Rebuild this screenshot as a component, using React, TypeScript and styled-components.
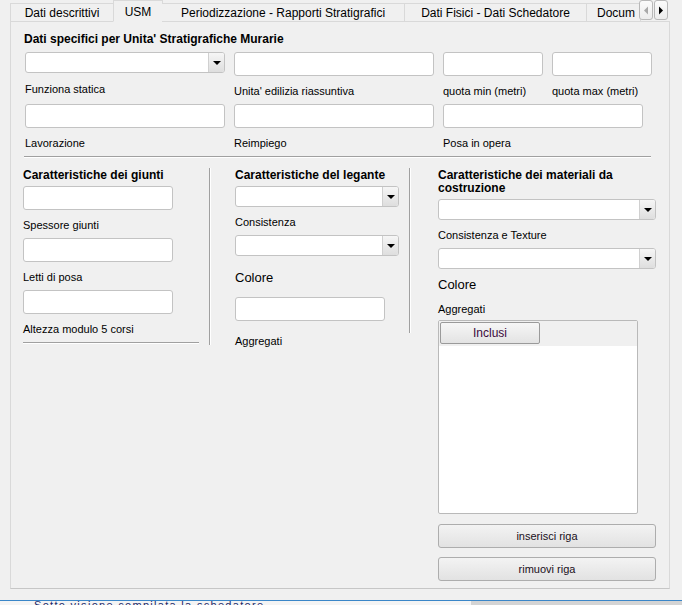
import React from 'react';
import styled, { createGlobalStyle } from 'styled-components';

const GlobalStyle = createGlobalStyle`
    html, body {
        margin: 0;
        padding: 0;
        background: #f0f0f0;
    }
    body {
        font-family: 'Liberation Sans', Arial, sans-serif;
        color: #000;
    }
`;

const Screen = styled.div`
    width: 682px;
    height: 605px;
    overflow: hidden;
    display: flex;
    flex-direction: column;
    background: #f0f0f0;
`;

const Window = styled.div`
    width: 680px;
    height: 600px;
    border-right: 2px solid #3a86c8;
    border-bottom: 1px solid #3a86c8;
    display: flex;
    flex-direction: column;
    padding-left: 10px;
    box-sizing: content-box;
`;

const StatusStrip = styled.div`
    height: 4px;
    display: flex;
    overflow: hidden;
`;

const StatusText = styled.div`
    width: 437px;
    background: #f4f4f4;
    font-size: 11px;
    line-height: 11px;
    color: #1d2a6a;
    white-space: nowrap;
    padding-left: 34px;
    margin-top: -1px;
    letter-spacing: 1.3px;
`;

const StatusRest = styled.div`
    flex: 1;
    background: #d4d4d4;
`;

const TabStrip = styled.div`
    height: 22px;
    width: 660px;
    display: flex;
    align-items: flex-end;
    position: relative;
    z-index: 1;
`;

const Tab = styled.div<{ $active?: boolean; $width: number }>`
    width: ${(p) => p.$width}px;
    height: ${(p) => (p.$active ? 22 : 19)}px;
    box-sizing: border-box;
    border: 1px solid #d9d9d9;
    border-bottom: ${(p) => (p.$active ? '1px solid #f0f0f0' : '1px solid #d9d9d9')};
    border-left: ${(p) => (p.$active ? '1px solid #d9d9d9' : 'none')};
    margin-left: ${(p) => (p.$active ? '-1px' : '0')};
    margin-right: ${(p) => (p.$active ? '-1px' : '0')};
    background: #f0f0f0;
    font-size: 12px;
    line-height: 18px;
    padding-top: ${(p) => (p.$active ? 2 : 0)}px;
    text-align: center;
    white-space: nowrap;
    overflow: hidden;
    flex-shrink: 0;
    &:first-child {
        border-left: 1px solid #d9d9d9;
    }
`;

const ClippedTab = styled(Tab)`
    text-align: left;
    padding-left: 10px;
`;

const Scroller = styled.div`
    display: flex;
    align-self: flex-start;
    margin-left: -2px;
`;

const ArrowButton = styled.div`
    width: 14px;
    height: 20px;
    box-sizing: border-box;
    border: 1px solid #b8b8b8;
    border-radius: 3px;
    background: linear-gradient(#fbfbfb, #ececec);
    display: flex;
    align-items: center;
    justify-content: center;
    margin-right: 1px;
`;

const Pane = styled.div`
    width: 660px;
    height: 568px;
    margin-top: -1px;
    box-sizing: border-box;
    border: 1px solid #d9d9d9;
    border-bottom-color: #c6c6c6;
    background: #f0f0f0;
    display: flex;
    flex-direction: column;
    padding: 10px 0 0 13px;
`;

const SectionTitle = styled.div`
    font-weight: bold;
    font-size: 12px;
    line-height: 14px;
    height: 14px;
`;

const TopGrid = styled.div`
    display: grid;
    grid-template-columns: 200px 200px 100px 100px;
    column-gap: 9px;
    row-gap: 6px;
    margin-top: 6px;
    padding-left: 1px;
`;

const Field = styled.div<{ $span?: number }>`
    display: flex;
    flex-direction: column;
    grid-column: span ${(p) => p.$span ?? 1};
`;

const Caption = styled.div<{ $gap?: number }>`
    font-size: 11px;
    line-height: 14px;
    height: 14px;
    margin-top: ${(p) => p.$gap ?? 8}px;
    white-space: nowrap;
`;

const BigCaption = styled.div<{ $gap: number }>`
    font-size: 13px;
    line-height: 16px;
    height: 16px;
    margin-top: ${(p) => p.$gap}px;
`;

const TextBox = styled.div<{ $width?: number }>`
    width: ${(p) => (p.$width ? `${p.$width}px` : '100%')};
    height: 24px;
    box-sizing: border-box;
    border: 1px solid #c3c3c3;
    border-radius: 3px;
    background: #fff;
`;

const ComboBox = styled.div<{ $width?: number }>`
    width: ${(p) => (p.$width ? `${p.$width}px` : '100%')};
    height: 21px;
    box-sizing: border-box;
    border: 1px solid #c3c3c3;
    border-radius: 3px;
    background: #fff;
    display: flex;
    justify-content: flex-end;
    overflow: hidden;
`;

const DropButton = styled.div`
    width: 15px;
    height: 100%;
    border-left: 1px solid #d0d0d0;
    background: linear-gradient(#f6f6f6, #dedede);
    display: flex;
    align-items: center;
    justify-content: center;
`;

const DownTriangle = styled.div`
    width: 0;
    height: 0;
    border-left: 4px solid transparent;
    border-right: 4px solid transparent;
    border-top: 4px solid #000;
`;

const Separator = styled.div<{ $width: number }>`
    width: ${(p) => p.$width}px;
    height: 0;
    border-top: 1px solid #a0a0a0;
    border-bottom: 1px solid #ffffff;
`;

const Columns = styled.div`
    display: flex;
    align-items: flex-start;
    margin-top: 10px;
    margin-left: -1px;
`;

const Column = styled.div<{ $width: number }>`
    width: ${(p) => p.$width}px;
    display: flex;
    flex-direction: column;
    flex-shrink: 0;
`;

const VRule = styled.div<{ $height: number; $before: number; $after: number }>`
    width: 0;
    height: ${(p) => p.$height}px;
    border-left: 1px solid #a0a0a0;
    border-right: 1px solid #ffffff;
    margin-left: ${(p) => p.$before}px;
    margin-right: ${(p) => p.$after}px;
    flex-shrink: 0;
`;

const Heading = styled.div`
    font-weight: bold;
    font-size: 12px;
    line-height: 13px;
    padding-top: 1px;
`;

const Gap = styled.div<{ $h: number }>`
    height: ${(p) => p.$h}px;
    flex-shrink: 0;
`;

const TableBox = styled.div`
    width: 200px;
    height: 194px;
    box-sizing: border-box;
    border: 1px solid #b9b9b9;
    border-radius: 2px;
    background: #fff;
    display: flex;
    flex-direction: column;
    margin-top: 4px;
`;

const TableHeader = styled.div`
    height: 24px;
    background: #f0f0f0;
    padding: 1px 0 0 1px;
    display: flex;
`;

const HeaderCell = styled.div`
    width: 100px;
    height: 22px;
    box-sizing: border-box;
    border: 1px solid #9a9a9a;
    border-radius: 2px;
    background: linear-gradient(#f6f6f6, #e3e3e3);
    font-size: 12px;
    line-height: 20px;
    text-align: center;
    color: #3c0a3c;
`;

const PushButton = styled.div<{ $gap: number }>`
    width: 218px;
    height: 24px;
    margin-top: ${(p) => p.$gap}px;
    box-sizing: border-box;
    border: 1px solid #adadad;
    border-radius: 3px;
    background: linear-gradient(#f3f3f3, #e2e2e2);
    font-size: 11px;
    line-height: 22px;
    text-align: center;
    color: #1a0f1a;
`;

function Combo({ width }: { width?: number }) {
    return (
        <ComboBox $width={width}>
            <DropButton>
                <DownTriangle />
            </DropButton>
        </ComboBox>
    );
}

const tabs = [
    { label: 'Dati descrittivi', width: 104 },
    { label: 'USM', width: 50, active: true },
    { label: 'Periodizzazione - Rapporti Stratigrafici', width: 243 },
    { label: 'Dati Fisici - Dati Schedatore', width: 182 },
];

export default function App() {
    return (
        <Screen>
            <GlobalStyle />
            <Window>
                <TabStrip>
                    {tabs.map((t) => (
                        <Tab key={t.label} $width={t.width} $active={t.active}>
                            {t.label}
                        </Tab>
                    ))}
                    <ClippedTab $width={54}>Docum</ClippedTab>
                    <Scroller>
                        <ArrowButton>
                            <svg width="6" height="9" viewBox="0 0 6 9">
                                <path d="M5 0.5 L1 4.5 L5 8.5 Z" fill="#a8a8a8" />
                            </svg>
                        </ArrowButton>
                        <ArrowButton>
                            <svg width="6" height="9" viewBox="0 0 6 9">
                                <path d="M1 0.5 L5 4.5 L1 8.5 Z" fill="#000" />
                            </svg>
                        </ArrowButton>
                    </Scroller>
                </TabStrip>
                <Pane>
                    <SectionTitle>Dati specifici per Unita' Stratigrafiche Murarie</SectionTitle>
                    <TopGrid>
                        <Field>
                            <Combo />
                            <Caption $gap={9}>Funziona statica</Caption>
                        </Field>
                        <Field>
                            <TextBox />
                            <Caption>Unita' edilizia riassuntiva</Caption>
                        </Field>
                        <Field>
                            <TextBox />
                            <Caption>quota min (metri)</Caption>
                        </Field>
                        <Field>
                            <TextBox />
                            <Caption>quota max (metri)</Caption>
                        </Field>
                        <Field>
                            <TextBox />
                            <Caption>Lavorazione</Caption>
                        </Field>
                        <Field>
                            <TextBox />
                            <Caption>Reimpiego</Caption>
                        </Field>
                        <Field $span={2}>
                            <TextBox $width={200} />
                            <Caption>Posa in opera</Caption>
                        </Field>
                    </TopGrid>
                    <Gap $h={6} />
                    <Separator $width={627} />
                    <Columns>
                        <Column $width={176}>
                            <Heading>Caratteristiche dei giunti</Heading>
                            <Gap $h={4} />
                            <TextBox $width={150} />
                            <Caption>Spessore giunti</Caption>
                            <Gap $h={6} />
                            <TextBox $width={150} />
                            <Caption>Letti di posa</Caption>
                            <Gap $h={6} />
                            <TextBox $width={150} />
                            <Caption>Altezza modulo 5 corsi</Caption>
                            <Gap $h={6} />
                            <Separator $width={176} />
                        </Column>
                        <VRule $height={177} $before={10} $after={24} />
                        <Column $width={164}>
                            <Heading>Caratteristiche del legante</Heading>
                            <Gap $h={4} />
                            <Combo />
                            <Caption>Consistenza</Caption>
                            <Gap $h={6} />
                            <Combo />
                            <BigCaption $gap={14}>Colore</BigCaption>
                            <Gap $h={11} />
                            <TextBox $width={150} />
                            <Caption $gap={13}>Aggregati</Caption>
                        </Column>
                        <VRule $height={165} $before={10} $after={27} />
                        <Column $width={218}>
                            <Heading>
                                Caratteristiche dei materiali da
                                <br />
                                costruzione
                            </Heading>
                            <Gap $h={4} />
                            <Combo />
                            <Caption>Consistenza e Texture</Caption>
                            <Gap $h={6} />
                            <Combo />
                            <BigCaption $gap={8}>Colore</BigCaption>
                            <Caption $gap={9}>Aggregati</Caption>
                            <TableBox>
                                <TableHeader>
                                    <HeaderCell>Inclusi</HeaderCell>
                                </TableHeader>
                            </TableBox>
                            <PushButton $gap={10}>inserisci riga</PushButton>
                            <PushButton $gap={9}>rimuovi riga</PushButton>
                        </Column>
                    </Columns>
                </Pane>
            </Window>
            <StatusStrip>
                <StatusText>Sotto visione compilata la schedatore</StatusText>
                <StatusRest />
            </StatusStrip>
        </Screen>
    );
}
